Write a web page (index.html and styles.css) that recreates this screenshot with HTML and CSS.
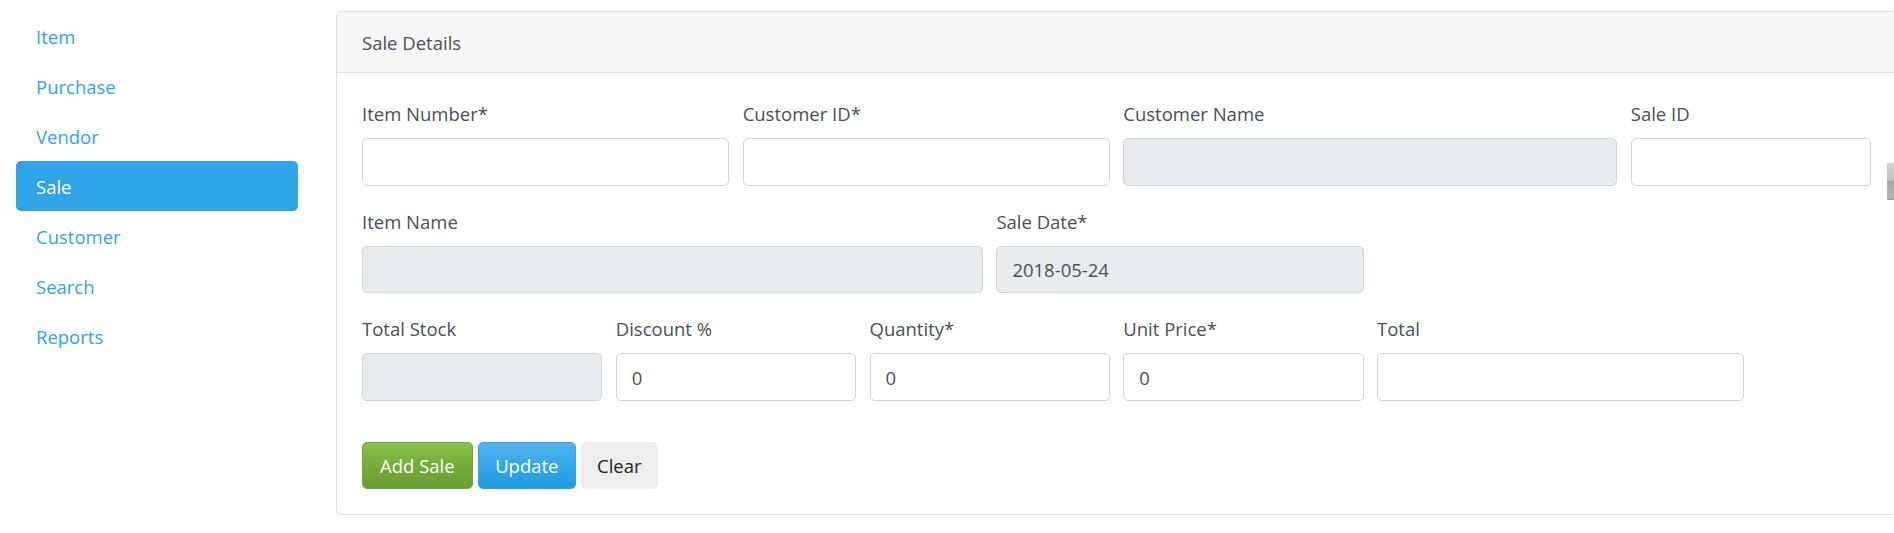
FILE: index.html
```html
<!DOCTYPE html>
<html>
<head>
<meta charset="utf-8">
<title>Sale</title>
<link rel="stylesheet" href="styles.css">
</head>
<body>
<div class="page">
  <nav class="sidebar">
    <a class="nav-link" href="#">Item</a>
    <a class="nav-link" href="#">Purchase</a>
    <a class="nav-link" href="#">Vendor</a>
    <a class="nav-link active" href="#">Sale</a>
    <a class="nav-link" href="#">Customer</a>
    <a class="nav-link" href="#">Search</a>
    <a class="nav-link" href="#">Reports</a>
  </nav>
  <section class="card">
    <div class="card-header">Sale Details</div>
    <div class="card-body">
      <form class="sale-form">
        <div class="form-row">
          <div class="group span-3"><label>Item Number*</label><input class="control" type="text"></div>
          <div class="group span-3"><label>Customer ID*</label><input class="control" type="text"></div>
          <div class="group span-4"><label>Customer Name</label><input class="control" type="text" readonly></div>
          <div class="group span-2"><label>Sale ID</label><input class="control" type="text"></div>
        </div>
        <div class="form-row">
          <div class="group span-5"><label>Item Name</label><input class="control" type="text" readonly></div>
          <div class="group span-3"><label>Sale Date*</label><input class="control" type="text" value="2018-05-24" readonly></div>
        </div>
        <div class="form-row">
          <div class="group span-2"><label>Total Stock</label><input class="control" type="text" readonly></div>
          <div class="group span-2"><label>Discount %</label><input class="control" type="text" value="0"></div>
          <div class="group span-2"><label>Quantity*</label><input class="control" type="text" value="0"></div>
          <div class="group span-2"><label>Unit Price*</label><input class="control" type="text" value="0"></div>
          <div class="group span-3"><label>Total</label><input class="control" type="text"></div>
        </div>
        <div class="actions">
          <button type="button" class="btn btn-success">Add Sale</button>
          <button type="button" class="btn btn-primary">Update</button>
          <button type="button" class="btn btn-light">Clear</button>
        </div>
      </form>
    </div>
  </section>
  <div class="edge-thumb"></div>
</div>
</body>
</html>
```

FILE: styles.css
```css
* { box-sizing: border-box; }
html, body { margin: 0; padding: 0; overflow: hidden; background: #fff; }
body {
  font-family: "Segoe UI", "Open Sans", "Noto Sans", sans-serif;
  font-size: 18.5px;
  line-height: 30px;
  color: #495057;
}
.page {
  display: flex;
  align-items: flex-start;
  padding-top: 11px;
  padding-left: 16px;
  width: 1900px;
}
.sidebar {
  display: flex;
  flex-direction: column;
  width: 282px;
  flex: 0 0 282px;
  margin-right: 38px;
}
.nav-link {
  display: block;
  height: 50px;
  padding: 11px 20px 9px;
  color: #2fa4e7;
  text-decoration: none;
  border-radius: 5px;
}
.nav-link.active {
  background: #2fa4e7;
  color: #fff;
}
.card {
  flex: 0 0 1561px;
  width: 1561px;
  border: 1.25px solid #dfdfdf;
  border-radius: 5px;
  background: #fff;
}
.card-header {
  background: #f7f7f7;
  padding: 16px 25px 14px;
  height: 61px;
  border-bottom: 1.25px solid #dfdfdf;
  border-radius: 5px 5px 0 0;
}
.card-body {
  padding: 25px;
}
.sale-form {
  width: 1509px;
}
.form-row {
  display: grid;
  grid-template-columns: repeat(12, 1fr);
  column-gap: 13.5px;
}
.group { margin-bottom: 20px; }
.span-2 { grid-column: span 2; }
.span-3 { grid-column: span 3; }
.span-4 { grid-column: span 4; }
.span-5 { grid-column: span 5; }
label {
  display: block;
  height: 30px;
  padding-top: 1px;
  margin-bottom: 10px;
}
.control {
  display: block;
  width: 100%;
  height: 47.5px;
  padding: 8px 15px 7px;
  font: inherit;
  color: #495057;
  background: #fff;
  border: 1.25px solid #ced4da;
  border-radius: 5px;
  outline: none;
}
.control[readonly] { background: #e9ecef; }
.actions {
  display: flex;
  gap: 5.5px;
  padding-top: 21px;
}
.btn {
  height: 47.5px;
  padding: 8px 17px 7px;
  font: inherit;
  border-radius: 5px;
  border: 1.25px solid transparent;
  cursor: pointer;
}
.btn-success {
  color: #fff;
  background: linear-gradient(#88c149, #73a839 60%, #6c9e36);
  border-color: #73a839;
}
.btn-primary {
  padding-left: 16px;
  padding-right: 16px;
  color: #fff;
  background: linear-gradient(#54b4eb, #2fa4e7 60%, #1d9ce5);
  border-color: #2fa4e7;
}
.btn-light {
  padding-left: 15px;
  padding-right: 15px;
  color: #222;
  background: #eeeeee;
  border-color: #eeeeee;
}
.edge-thumb {
  position: absolute;
  right: 0;
  top: 163px;
  width: 7px;
  height: 37px;
  background: linear-gradient(#d4d4d4, #c4c4c4 45%, #a9a9a9 50%, #b4b4b4 95%, #999);
}
```
